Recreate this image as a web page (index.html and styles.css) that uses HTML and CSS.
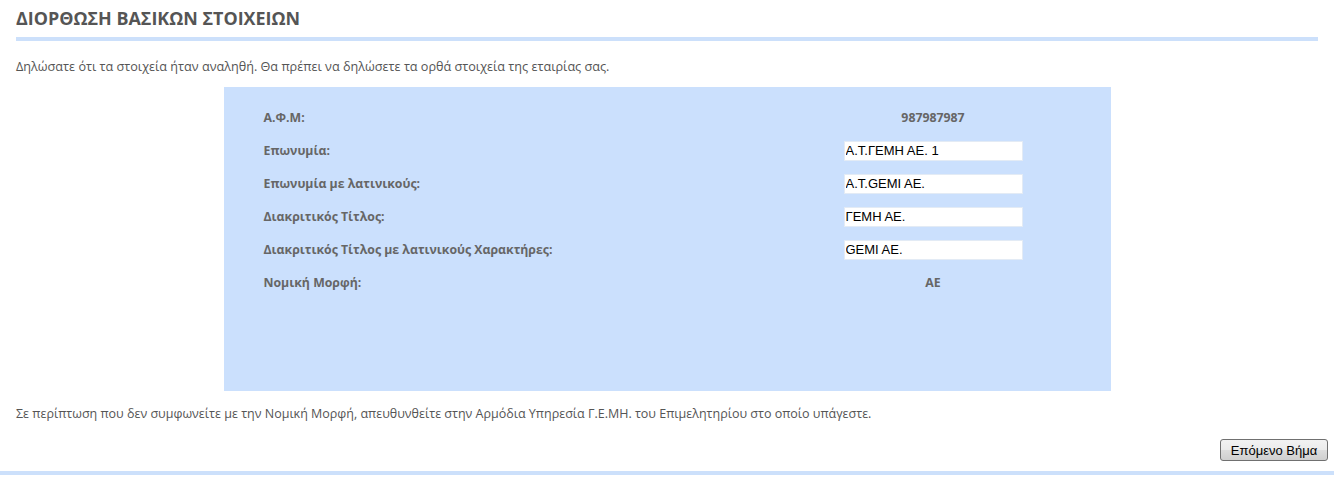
FILE: index.html
```html
<!DOCTYPE html>
<html>
<head>
    <title>Διόρθωση Βασικών Στοιχείων</title>
    <link rel="stylesheet" href="styles.css">
</head>
<body>
    <div class="page">
        <h2 class="page-title">ΔΙΟΡΘΩΣΗ ΒΑΣΙΚΩΝ ΣΤΟΙΧΕΙΩΝ</h2>
        <p class="intro">Δηλώσατε ότι τα στοιχεία ήταν αναληθή. Θα πρέπει να δηλώσετε τα ορθά στοιχεία της εταιρίας σας.</p>

        <div class="details">
            <form class="details-form" method="post" action="#">
                <div class="row">
                    <span class="label">Α.Φ.Μ:</span>
                    <span class="value">987987987</span>
                </div>
                <div class="row">
                    <label class="label" for="name">Επωνυμία:</label>
                    <span class="value"><input type="text" id="name" value="Α.Τ.ΓΕΜΗ ΑΕ. 1"></span>
                </div>
                <div class="row">
                    <label class="label" for="name-latin">Επωνυμία με λατινικούς:</label>
                    <span class="value"><input type="text" id="name-latin" value="A.T.GEMI AE."></span>
                </div>
                <div class="row">
                    <label class="label" for="title">Διακριτικός Τίτλος:</label>
                    <span class="value"><input type="text" id="title" value="ΓΕΜΗ ΑΕ."></span>
                </div>
                <div class="row">
                    <label class="label" for="title-latin">Διακριτικός Τίτλος με λατινικούς Χαρακτήρες:</label>
                    <span class="value"><input type="text" id="title-latin" value="GEMI AE."></span>
                </div>
                <div class="row">
                    <span class="label">Νομική Μορφή:</span>
                    <span class="value">ΑΕ</span>
                </div>
            </form>
        </div>

        <p class="note">Σε περίπτωση που δεν συμφωνείτε με την Νομική Μορφή, απευθυνθείτε στην Αρμόδια Υπηρεσία Γ.Ε.ΜΗ. του Επιμελητηρίου στο οποίο υπάγεστε.</p>

        <div class="actions">
            <button type="button" class="next-button">Επόμενο Βήμα</button>
        </div>
    </div>
    <div class="bottom-line"></div>
</body>
</html>
```

FILE: styles.css
```css
body {
    margin: 0;
    background-color: #fff;
    font-family: "Open Sans", "Noto Sans", sans-serif;
    color: #555;
}

.page {
    padding: 0 16px;
}

.page-title {
    margin: 0;
    padding: 7px 0 8px 0;
    font-size: 17.9px;
    line-height: 22px;
    font-weight: bold;
    color: #555;
    border-bottom: 4px solid #cce0fb;
}

.intro {
    margin: 16px 0 12px 0;
    font-size: 12.65px;
    line-height: 18px;
}

.details {
    width: 887px;
    height: 304px;
    margin: 0 auto;
    box-sizing: border-box;
    padding: 14px 88px 0 40px;
    background-color: #cbe0fd;
}

.row {
    display: flex;
    align-items: center;
    height: 33px;
}

.label {
    flex: 1;
    font-size: 12.3px;
    font-weight: bold;
    color: #666;
}

.value {
    width: 179px;
    text-align: center;
    font-size: 12.3px;
    font-weight: bold;
    color: #666;
}

.value input {
    display: block;
    width: 179px;
    height: 20px;
    box-sizing: border-box;
    margin: 0;
    padding: 0 1px;
    border: 1px solid #e3ebf5;
    background-color: #fff;
    font-family: "Liberation Sans", Arial, sans-serif;
    font-size: 13px;
    color: #000;
}

.note {
    margin: 14px 0 16px 0;
    font-size: 12.5px;
    line-height: 18px;
}

.actions {
    display: flex;
    justify-content: flex-end;
    margin-right: -10px;
}

.next-button {
    height: 22px;
    width: 108px;
    padding: 0;
    border: 1px solid #707070;
    border-radius: 3px;
    background: linear-gradient(#f2f2f2 0%, #ebebeb 50%, #dddddd 51%, #cfcfcf 100%);
    font-family: "Liberation Sans", Arial, sans-serif;
    font-size: 13px;
    color: #000;
    cursor: pointer;
}

.bottom-line {
    margin-top: 10px;
    height: 4px;
    background-color: #cce0fb;
}
```
